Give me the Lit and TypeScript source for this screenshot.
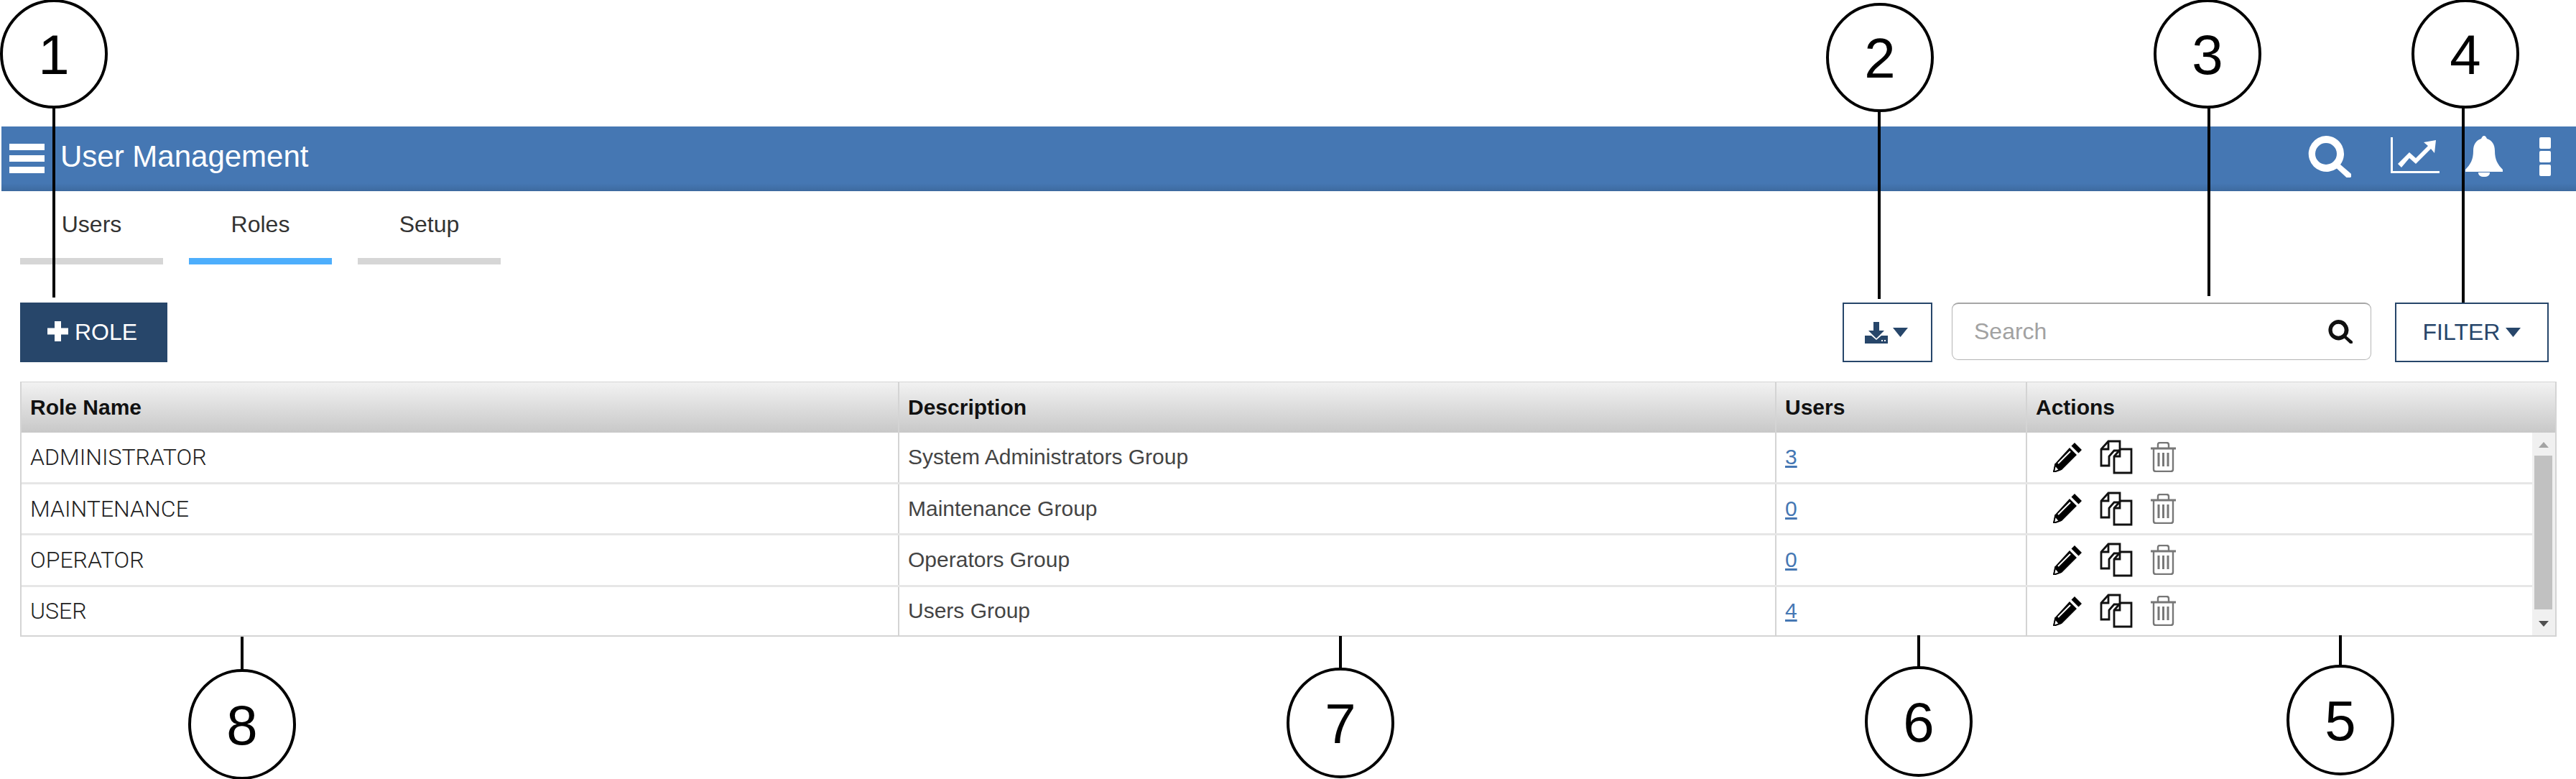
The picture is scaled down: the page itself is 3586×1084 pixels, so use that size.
import { LitElement, html, css, svg } from "lit";
import { customElement } from "lit/decorators.js";

const roles = [
  ["ADMINISTRATOR", "System Administrators Group", "3"],
  ["MAINTENANCE", "Maintenance Group", "0"],
  ["OPERATOR", "Operators Group", "0"],
  ["USER", "Users Group", "4"],
];

const callouts = [
  { n: "1", cx: 75, cy: 75, rx: 73, ry: 74, lx: 75, y1: 149, y2: 414 },
  { n: "2", cx: 2617, cy: 80, rx: 73, ry: 74, lx: 2616, y1: 154, y2: 416 },
  { n: "3", cx: 3073, cy: 75, rx: 73, ry: 74, lx: 3075, y1: 149, y2: 412 },
  { n: "4", cx: 3432, cy: 75, rx: 73, ry: 74, lx: 3429, y1: 149, y2: 421 },
  { n: "5", cx: 3258, cy: 1002, rx: 73, ry: 75, lx: 3258, y1: 884, y2: 927 },
  { n: "6", cx: 2671, cy: 1004, rx: 73, ry: 75, lx: 2671, y1: 884, y2: 929 },
  { n: "7", cx: 1866, cy: 1006, rx: 73, ry: 75, lx: 1866, y1: 885, y2: 931 },
  { n: "8", cx: 337, cy: 1008, rx: 73, ry: 75, lx: 337, y1: 886, y2: 933 },
];

const lensPath = "M25 0a25 25 0 0 1 20 40L59 52a4 4 0 0 1-5.500 6L40 45.500A25 25 0 1 1 25 0zm0 10a15 15 0 1 0 0 30 15 15 0 0 0 0-30z";

@customElement("app-root")
export class AppRoot extends LitElement {
  static styles = css`
    :host {
      display: block;
      position: relative;
      width: 3586px;
      height: 1084px;
      background: #fff;
      overflow: hidden;
      font-family: "Liberation Sans", Arial, sans-serif;
      color: #222;
    }
    .page { padding: 176px 27px 0 2px; display: flex; flex-direction: column; }
    .bar {
      height: 90px;
      display: flex;
      align-items: center;
      margin-right: -27px;
      background: linear-gradient(#4577b3 0, #4577b3 88%, #3d6a9f 100%);
      color: #fff;
    }
    .burger { width: 49px; height: 41px; margin: -2px 0 0 11px; display: flex; flex-direction: column; justify-content: space-between; }
    .burger i { height: 9px; background: #fff; display: block; }
    .title { font-size: 42px; margin: -6px 0 0 22px; flex: 1; }
    .bar-icons { display: flex; align-items: center; height: 100%; fill: #fff; }
    .bar-icons svg { display: block; }
    .ic-search { width: 60px; height: 58px; margin: -6px 0 0 0; }
    .ic-chart { width: 68px; height: 50px; margin: -10px 0 0 55px; }
    .ic-bell { width: 52px; height: 57px; margin: -8px 0 0 36px; }
    .ic-dots { width: 16px; height: 54px; margin: -6px 35px 0 51px; }
    .tabs { display: flex; gap: 36px; margin: 0 0 0 26px; height: 102px; }
    .tab {
      width: 199px;
      height: 102px;
      box-sizing: border-box;
      border-bottom: 9px solid #d6d6d6;
      font-size: 32px;
      text-align: center;
      padding-top: 28px;
      line-height: 36px;
      color: #333;
    }
    .tab.on { border-bottom-color: #4daefc; }
    .tools { display: flex; align-items: flex-start; margin: 53px 11px 0 26px; height: 83px; }
    .add {
      width: 205px; height: 83px; background: #27466a; color: #fff;
      display: flex; align-items: center; justify-content: center; gap: 9px;
      font-size: 32px; margin-right: auto; padding-right: 4px; box-sizing: border-box;
    }
    .add svg { width: 29px; height: 28px; fill: #fff; margin-top: -4px; }
    .outline {
      height: 83px; box-sizing: border-box; border: 2px solid #27466a; color: #27466a;
      display: flex; align-items: center; justify-content: center; font-size: 32px; background: #fff;
    }
    .dl { width: 125px; gap: 7px; margin-right: 27px; fill: #27466a; padding-right: 4px; }
    .dl .ic { width: 32px; height: 30px; }
    .caret { width: 21px; height: 13px; fill: #27466a; }
    .search {
      width: 584px; height: 80px; box-sizing: border-box; border: 1px solid #b5b5b5; border-top: 2px solid #a6a6a6;
      border-radius: 9px; display: flex; align-items: center; padding: 0 25px 0 30px; margin-right: 33px;
      font-size: 32px; color: #a2a2a2; justify-content: space-between;
    }
    .search svg { width: 34px; height: 33px; fill: #111; }
    .filter { width: 214px; gap: 8px; }
    .grid {
      margin: 27px 0 0 26px;
      width: 3531px; height: 355px;
      box-sizing: border-box;
      border: 2px solid #d4d4d4;
      border-top-width: 1px;
      display: flex; flex-direction: column;
      position: relative;
    }
    .row { display: grid; grid-template-columns: 1222px 1221px 349px 1fr; }
    .head {
      height: 70px;
      background: linear-gradient(#f2f2f2, #c8c8c8);
      font-weight: 700;
      font-size: 30px;
      color: #111;
    }
    .c {
      box-sizing: border-box;
      border-right: 2px solid #d4d4d4;
      display: flex; align-items: center;
      padding-left: 12px;
    }
    .c:last-child { border-right: 0; }
    .body { flex: 1; display: flex; flex-direction: column; padding-right: 32px; position: relative; }
    .data { height: 71.5px; box-sizing: border-box; font-size: 30px; color: #444; border-bottom: 3px solid #e6e6e6; }
    .data:nth-child(4) { flex: 1; height: auto; border-bottom: 0; }
    .name { font-family: Roboto, sans-serif; font-weight: 300; font-size: 32px; color: #222; }
    a { color: #4577b3; text-decoration: underline; }
    .c.acts { padding-left: 36px; }
    .acts svg { display: block; }
    .pen { width: 40px; height: 41px; }
    .cp { width: 46px; height: 48px; margin-left: 25px; }
    .tr { width: 37px; height: 42px; margin-left: 24px; }
    .sb {
      position: absolute; top: 0; right: 0; bottom: 0; width: 32px; background: #f0f0f0;
      display: flex; flex-direction: column; align-items: center; justify-content: space-between;
      box-sizing: border-box; padding: 13px 0 12px;
    }
    .sb .th { position: absolute; left: 3px; top: 32px; width: 25px; height: 214px; background: #c1c1c1; }
    .sb svg { width: 14px; height: 8px; display: block; }
    .note { position: absolute; inset: 0; width: 3586px; height: 1084px; pointer-events: none; }
    .note text { font-family: "Liberation Sans", Arial, sans-serif; font-size: 78px; fill: #000; text-anchor: middle; }
  `;

  private pencil() {
    return html`<svg class="pen" viewBox="0 0 40 41"><path d="M30 0l10 10-4.500 4.500-10-10zM23 7l10 10L12 38 0 41l3-12z" fill="#000"/><path d="M24 12L7 29" stroke="#fff" stroke-width="2"/><path d="M3 31l6 7-8 3z" fill="#fff" stroke="#000" stroke-width="2"/></svg>`;
  }
  private copy() {
    return html`<svg class="cp" viewBox="0 0 46 48" fill="#fff" stroke="#111" stroke-width="2.800"><path d="M12 2h16v13h-8l-7 8v13H2V13z"/><path d="M12 3v10H3" fill="none"/><path d="M29 13h15v33H20V23z"/><path d="M28 14v9h-8" fill="none"/></svg>`;
  }
  private trash() {
    return html`<svg class="tr" viewBox="0 0 37 42" fill="none" stroke="#777" stroke-width="2.400"><path d="M1 9h35" stroke-width="3"/><path d="M11 8V4q0-3 3-3h9q3 0 3 3v4"/><path d="M5 9v29q0 3 3 3h21q3 0 3-3V9"/><path d="M12 15v19M18.500 15v19M25 15v19" stroke-width="3"/></svg>`;
  }

  render() {
    return html`
      <div class="page">
        <header class="bar">
          <div class="burger"><i></i><i></i><i></i></div>
          <div class="title">User Management</div>
          <div class="bar-icons">
            <svg class="ic-search" viewBox="0 0 60 58"><path fill-rule="evenodd" d=${lensPath}/></svg>
            <svg class="ic-chart" viewBox="0 0 68 50"><path d="M0 0h3v47h65v3H0z"/><path d="M10 37l16-16 9 8 17-17-6-5 17-3-2 18-5-6-21 21-9-8-11 13z"/></svg>
            <svg class="ic-bell" viewBox="0 0 52 57"><path d="M26 0c2 0 3 2 4 4 7 2 11 8 11 17 0 12 4 19 11 26v3H0v-3c7-7 11-14 11-26 0-9 4-15 11-17 1-2 2-4 4-4z"/><path d="M18 51h16c0 4-3 6-8 6s-8-2-8-6z"/></svg>
            <svg class="ic-dots" viewBox="0 0 16 54"><rect width="16" height="16" rx="2"/><rect y="19" width="16" height="16" rx="2"/><rect y="38" width="16" height="16" rx="2"/></svg>
          </div>
        </header>
        <nav class="tabs">
          <div class="tab">Users</div>
          <div class="tab on">Roles</div>
          <div class="tab">Setup</div>
        </nav>
        <div class="tools">
          <div class="add"><svg viewBox="0 0 29 28"><path d="M10 0h9v9.500h10v9H19V28h-9v-9.500H0v-9h10z"/></svg>ROLE</div>
          <div class="outline dl">
            <svg class="ic" viewBox="0 0 32 30"><path d="M12 0h8v12h7L16 23 5 12h7z"/><path fill-rule="evenodd" d="M0 19h9l7 6 7-6h9v11H0zM23 25h2v2h-2zM27 25h2v2h-2z"/></svg>
            <svg class="caret" viewBox="0 0 21 13"><path d="M0 0h21L10.500 13z"/></svg>
          </div>
          <div class="search">Search <svg viewBox="0 0 60 58"><path fill-rule="evenodd" d=${lensPath}/></svg></div>
          <div class="outline filter">FILTER<svg class="caret" viewBox="0 0 21 13"><path d="M0 0h21L10.500 13z"/></svg></div>
        </div>
        <section class="grid">
          <div class="row head">
            <div class="c">Role Name</div><div class="c">Description</div><div class="c">Users</div><div class="c">Actions</div>
          </div>
          <div class="body">
            ${roles.map(
              (r) => html`<div class="row data">
                <div class="c name">${r[0]}</div>
                <div class="c">${r[1]}</div>
                <div class="c"><a>${r[2]}</a></div>
                <div class="c acts">${this.pencil()}${this.copy()}${this.trash()}</div>
              </div>`
            )}
            <div class="sb">
              <svg viewBox="0 0 14 8"><path d="M7 0l7 8H0z" fill="#a3a3a3"/></svg>
              <div class="th"></div>
              <svg viewBox="0 0 14 8"><path d="M0 0h14L7 8z" fill="#505050"/></svg>
            </div>
          </div>
        </section>
      </div>
      <svg class="note" viewBox="0 0 3586 1084">
        ${callouts.map(
          (c) => svg`
            <line x1=${c.lx} x2=${c.lx} y1=${c.y1} y2=${c.y2} stroke="#000" stroke-width="4"/>
            <ellipse cx=${c.cx} cy=${c.cy} rx=${c.rx} ry=${c.ry} fill="#fff" stroke="#000" stroke-width="4"/>
            <text x=${c.cx} y=${c.cy + 28}>${c.n}</text>`
        )}
      </svg>
    `;
  }
}
